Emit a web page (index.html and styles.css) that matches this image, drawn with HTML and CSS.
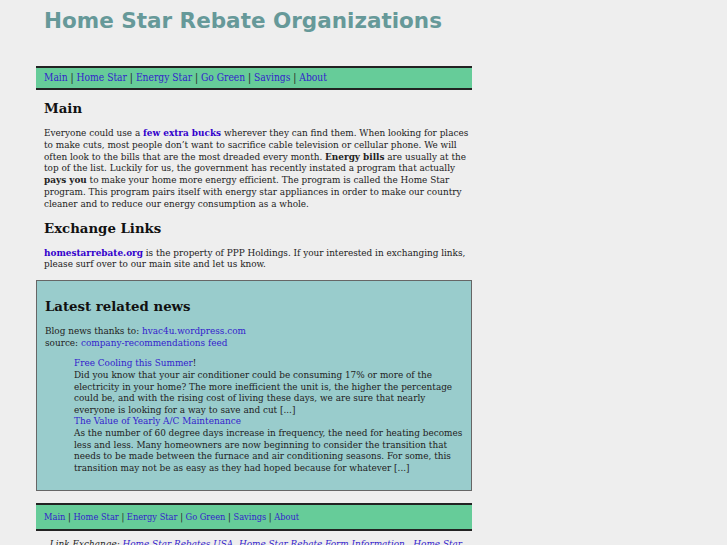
FILE: index.html
```html
<!DOCTYPE html>
<html>
<head>
<meta charset="utf-8">
<title>Home Star Rebate Organizations</title>
<link rel="stylesheet" href="styles.css">
</head>
<body>
<div class="wrap">
  <h1 class="title">Home Star Rebate Organizations</h1>
  <div class="nav">
    <a href="#">Main</a> | <a href="#">Home Star</a> | <a href="#">Energy Star</a> | <a href="#">Go Green</a> | <a href="#">Savings</a> | <a href="#">About</a>
  </div>
  <div class="content">
    <h2>Main</h2>
    <p>Everyone could use a <a class="strong" href="#">few extra bucks</a> wherever they can find them. When looking for places to make cuts, most people don’t want to sacrifice cable television or cellular phone. We will often look to the bills that are the most dreaded every month. <b>Energy bills</b> are usually at the top of the list. Luckily for us, the government has recently instated a program that actually <b>pays you</b> to make your home more energy efficient. The program is called the Home Star program. This program pairs itself with energy star appliances in order to make our country cleaner and to reduce our energy consumption as a whole.</p>
    <h2>Exchange Links</h2>
    <p><a class="strong" href="#">homestarrebate.org</a> is the property of PPP Holdings. If your interested in exchanging links, please surf over to our main site and let us know.</p>
  </div>
  <div class="news">
    <h2>Latest related news</h2>
    <p>Blog news thanks to: <a href="#">hvac4u.wordpress.com</a><br>source: <a href="#">company-recommendations feed</a></p>
    <ul class="items">
      <li><a href="#">Free Cooling this Summer</a>!<br>Did you know that your air conditioner could be consuming 17% or more of the electricity in your home? The more inefficient the unit is, the higher the percentage could be, and with the rising cost of living these days, we are sure that nearly everyone is looking for a way to save and cut [...]</li>
      <li><a href="#">The Value of Yearly A/C Maintenance</a><br>As the number of 60 degree days increase in frequency, the need for heating becomes less and less. Many homeowners are now beginning to consider the transition that needs to be made between the furnace and air conditioning seasons. For some, this transition may not be as easy as they had hoped because for whatever [...]</li>
    </ul>
  </div>
  <div class="nav foot">
    <a href="#">Main</a> | <a href="#">Home Star</a> | <a href="#">Energy Star</a> | <a href="#">Go Green</a> | <a href="#">Savings</a> | <a href="#">About</a>
  </div>
  <p class="exchange">Link Exchange: <a href="#">Home Star Rebates USA</a>, <a href="#">Home Star Rebate Form Information</a> , <a href="#">Home Star Rebates</a></p>
</div>
</body>
</html>
```
FILE: styles.css
```css
html, body {
  margin: 0;
  padding: 0;
  background: #eeeeee;
}
body {
  font-family: "DejaVu Serif Condensed", "DejaVu Serif", serif;
  font-stretch: condensed;
  font-size: 9.88px;
  line-height: 11.8px;
  color: #222222;
}
a {
  color: #3322cc;
  text-decoration: none;
}
a.strong {
  font-weight: bold;
  color: #3300cc;
}
.wrap {
  width: 436px;
  margin-left: 36px;
}
.title {
  font-family: "DejaVu Sans", sans-serif;
  font-stretch: normal;
  font-size: 21.5px;
  line-height: normal;
  font-weight: bold;
  color: #669999;
  margin: 0;
  padding: 8px 0 0 8px;
  height: 66px;
  box-sizing: border-box;
}
.nav {
  background: #66cc99;
  border-top: 2px solid #222222;
  border-bottom: 2px solid #222222;
  padding: 4px 8px;
  font-size: 10.2px;
  line-height: 12px;
  color: #222222;
}
.content {
  padding: 0 0 0 8px;
}
h2 {
  font-family: "DejaVu Serif", serif;
  font-stretch: normal;
  font-size: 13.3px;
  line-height: normal;
  font-weight: bold;
  color: #111111;
  margin: 11px 0 11px 0;
}
p {
  margin: 0 0 10px 0;
}
.news {
  background: #99cccc;
  border: 1px solid #666666;
  padding: 8px 2px 17px 8px;
  margin-top: 10px;
  line-height: 11.6px;
}
.news h2 {
  margin: 10px 0 11px 0;
}
.news p {
  margin-bottom: 9px;
}
.items {
  list-style: none;
  margin: 0;
  padding: 0 0 0 29px;
}
.foot {
  margin-top: 12px;
  font-size: 9.2px;
  padding-top: 6px;
  padding-bottom: 6px;
}
.exchange {
  font-style: italic;
  text-align: center;
  margin: 7px 0 0 0;
  padding: 0 4px 0 8px;
}
```
